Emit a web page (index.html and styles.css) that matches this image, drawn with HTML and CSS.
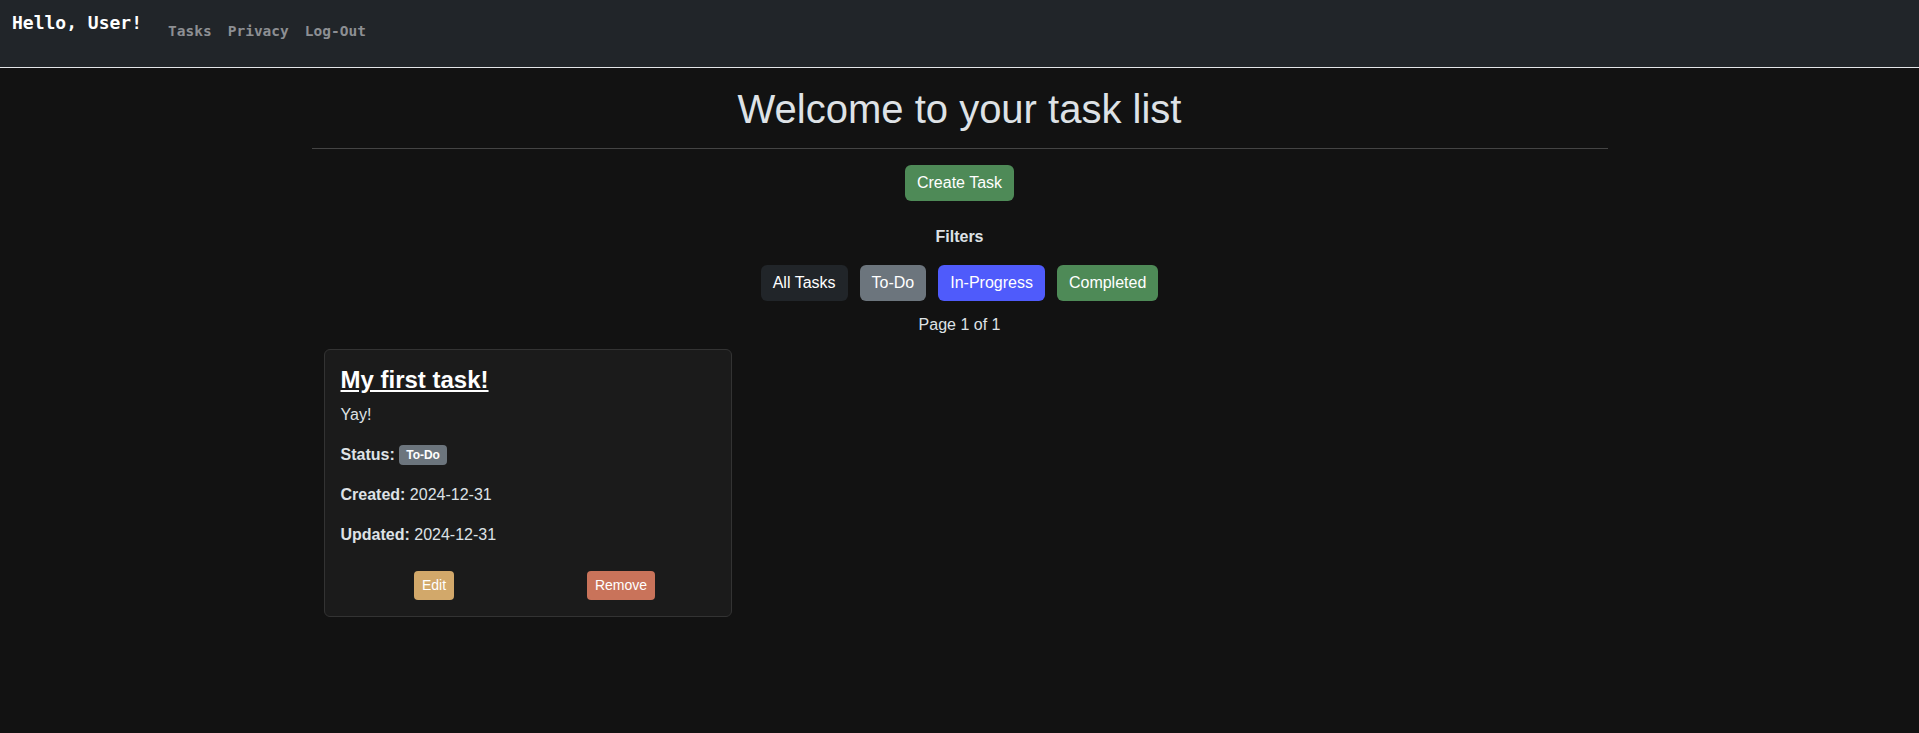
FILE: index.html
```html
<!DOCTYPE html>
<html lang="en">
<head>
<meta charset="utf-8">
<title>Task list</title>
<link rel="stylesheet" href="styles.css">
</head>
<body>
<nav class="navbar">
  <span class="brand">Hello, User!</span>
  <ul class="nav-links">
    <li><a href="#">Tasks</a></li>
    <li><a href="#">Privacy</a></li>
    <li><a href="#">Log-Out</a></li>
  </ul>
</nav>
<main class="container">
  <h1 class="title">Welcome to your task list</h1>
  <hr class="divider">
  <div class="center">
    <a class="btn btn-green" href="#">Create Task</a>
    <p class="filters-label">Filters</p>
    <div class="filters">
      <a class="btn btn-dark" href="#">All Tasks</a>
      <a class="btn btn-gray" href="#">To-Do</a>
      <a class="btn btn-blue" href="#">In-Progress</a>
      <a class="btn btn-green" href="#">Completed</a>
    </div>
    <p class="page-info">Page 1 of 1</p>
  </div>
  <div class="cards">
    <div class="card">
      <h4 class="card-title"><a href="#">My first task!</a></h4>
      <p class="line">Yay!</p>
      <p class="line"><strong>Status:</strong> <span class="badge">To-Do</span></p>
      <p class="line"><strong>Created:</strong> 2024-12-31</p>
      <p class="line"><strong>Updated:</strong> 2024-12-31</p>
      <div class="card-actions">
        <div class="action-col"><a class="btn-sm btn-tan" href="#">Edit</a></div>
        <div class="action-col"><a class="btn-sm btn-red" href="#">Remove</a></div>
      </div>
    </div>
  </div>
</main>
</body>
</html>
```

FILE: styles.css
```css
* { box-sizing: border-box; }

html, body {
  margin: 0;
  padding: 0;
}

body {
  background: #121212;
  color: #dee2e6;
  font-family: "Liberation Sans", Arial, sans-serif;
  font-size: 16px;
  line-height: 1.5;
}

a { text-decoration: none; }

.navbar {
  display: flex;
  align-items: flex-start;
  height: 68px;
  padding: 9px 0 0 12px;
  background: #212529;
  border-bottom: 1px solid #e3e5e8;
  font-family: "DejaVu Sans Mono", "Liberation Mono", monospace;
  font-weight: bold;
}

.brand {
  font-size: 18px;
  line-height: 27px;
  color: #ffffff;
  margin-right: 18px;
}

.nav-links {
  display: flex;
  list-style: none;
  margin: 12px 0 0 0;
  padding: 0;
}

.nav-links a {
  display: block;
  padding: 0 8px;
  font-size: 14.5px;
  line-height: 21.75px;
  color: #8d8f93;
}

.container {
  width: 1320px;
  margin: 0 auto;
  padding: 17px 12px 0;
}

.title {
  margin: 0 0 15px;
  font-size: 40px;
  font-weight: 400;
  line-height: 1.2;
  text-align: center;
  color: #dee2e6;
}

.divider {
  margin: 0 0 16px;
  border: 0;
  border-top: 1px solid #444444;
  height: 0;
}

.center {
  display: flex;
  flex-direction: column;
  align-items: center;
}

.btn {
  display: inline-block;
  padding: 6px 12px;
  font-size: 16px;
  line-height: 24px;
  color: #ffffff;
  border-radius: 6px;
}

.btn-green { background: #4e8a57; }
.btn-dark { background: #212529; }
.btn-gray { background: #6c757d; }
.btn-blue { background: #4f5bfb; }

.filters-label {
  margin: 24px 0 16px;
  font-weight: bold;
}

.filters {
  display: flex;
  gap: 12px;
}

.page-info {
  margin: 12px 0 12px;
}

.cards {
  display: flex;
  padding-left: 12px;
}

.card {
  width: 408px;
  padding: 16px;
  background: #1b1b1b;
  border: 1px solid #333333;
  border-radius: 6px;
}

.card-title {
  margin: 0 0 8px;
  font-size: 24px;
  line-height: 1.2;
  font-weight: bold;
}

.card-title a {
  color: #ffffff;
  text-decoration: underline;
}

.line {
  margin: 0 0 16px;
}

.badge {
  display: inline-block;
  padding: 4px 7px;
  font-size: 12px;
  line-height: 1;
  font-weight: bold;
  color: #ffffff;
  background: #6c757d;
  border-radius: 4px;
  vertical-align: 1px;
}

.card-actions {
  display: flex;
  margin-top: 24px;
}

.action-col {
  flex: 1;
  display: flex;
  justify-content: center;
}

.btn-sm {
  display: inline-block;
  padding: 4px 8px;
  font-size: 14px;
  line-height: 21px;
  color: #ffffff;
  border-radius: 4px;
}

.btn-tan { background: #d2a86a; }
.btn-red { background: #c9735a; }
```
